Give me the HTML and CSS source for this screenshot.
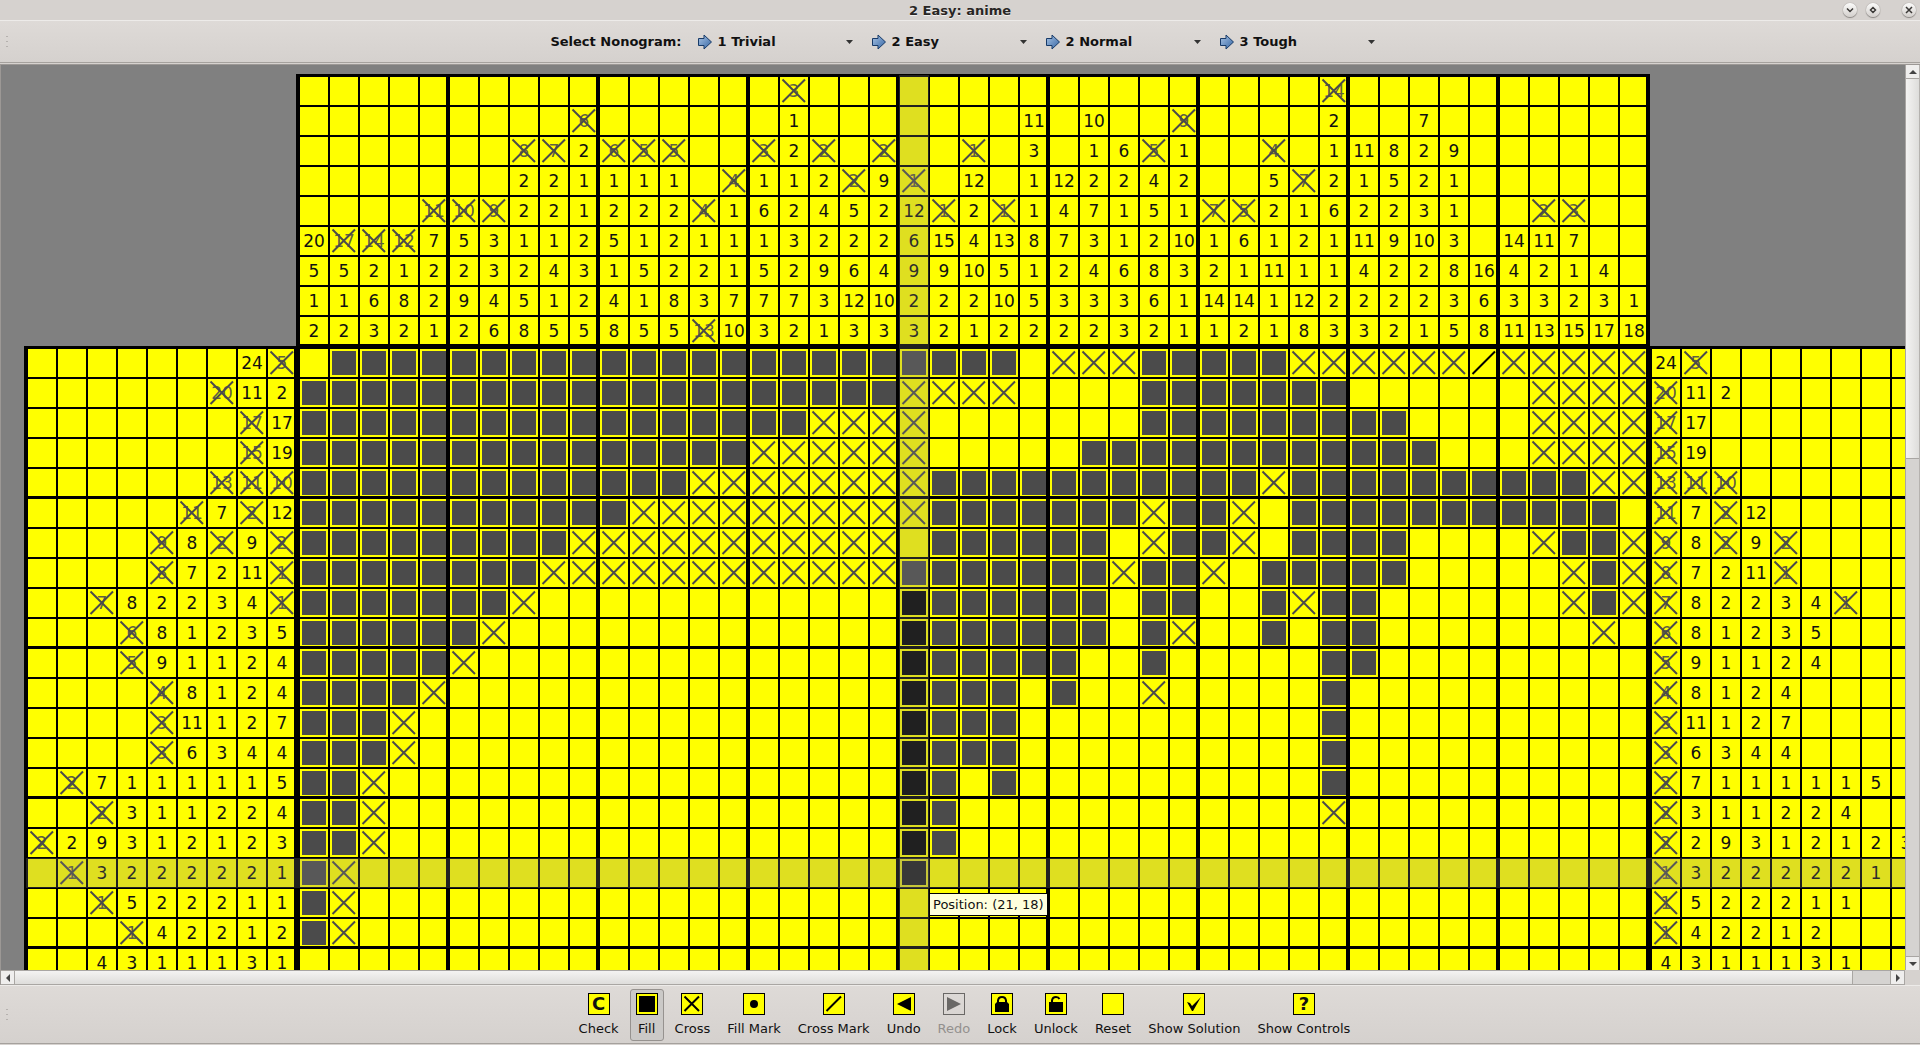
FILE: index.html
```html
<!DOCTYPE html>
<html lang="en">
<head>
<meta charset="utf-8">
<title>2 Easy: anime</title>
<link rel="stylesheet" href="styles.css">
</head>
<body>
<svg class="sprite" aria-hidden="true">
  <defs>
    <linearGradient id="arrow-fill" x1="0" y1="0" x2="1" y2="1">
      <stop offset="0" stop-color="#a9c4e4"/>
      <stop offset="1" stop-color="#3465a4"/>
    </linearGradient>
  </defs>
  <symbol id="cross" viewBox="0 0 28 28">
    <path d="M2.500 2.500L25 25M25 2.500L2.500 25"/>
  </symbol>
  <symbol id="slash" viewBox="0 0 28 28">
    <path d="M25 2.500L2.500 25"/>
  </symbol>
  <symbol id="arrow" viewBox="0 0 16 16">
    <path d="M1.500 4.500H7V1L14.500 8L7 15V11.500H1.500Z" fill="url(#arrow-fill)" stroke="#173a68"/>
  </symbol>
  <symbol id="caret" viewBox="0 0 8 4">
    <path d="M0 0H7L3.500 4Z" fill="#333"/>
  </symbol>
</svg>

<header class="titlebar">
  <h1 class="title">2 Easy: anime</h1>
  <div class="window-buttons">
    <button class="window-button" aria-label="Minimize"><svg viewBox="0 0 14 14"><path d="M4 5.500L7 8.500L10 5.500"/></svg></button>
    <button class="window-button" aria-label="Maximize"><svg viewBox="0 0 14 14"><path d="M7 4.500L9.500 7L7 9.500L4.500 7Z"/></svg></button>
    <button class="window-button close" aria-label="Close"><svg viewBox="0 0 14 14"><path d="M4 4L10 10M10 4L4 10"/></svg></button>
  </div>
</header>

<nav class="toolbar selectors">
  <span class="handle"></span>
  <div class="toolbar-items">
    <span class="selector-title">Select Nonogram:</span>
    <div class="selector"><svg class="arrow"><use href="#arrow"/></svg><select aria-label="Trivial puzzles"><option>1 Trivial</option></select><svg class="caret"><use href="#caret"/></svg></div>
    <div class="selector"><svg class="arrow"><use href="#arrow"/></svg><select aria-label="Easy puzzles"><option>2 Easy</option></select><svg class="caret"><use href="#caret"/></svg></div>
    <div class="selector"><svg class="arrow"><use href="#arrow"/></svg><select aria-label="Normal puzzles"><option>2 Normal</option></select><svg class="caret"><use href="#caret"/></svg></div>
    <div class="selector"><svg class="arrow"><use href="#arrow"/></svg><select aria-label="Tough puzzles"><option>3 Tough</option></select><svg class="caret"><use href="#caret"/></svg></div>
  </div>
</nav>

<main class="scroll-area">
  <div class="view">
    <div class="board">
      <table class="cells clues-top" id="clues-top"></table>
      <table class="cells clues-left" id="clues-left"></table>
      <table class="cells field" id="field"></table>
      <table class="cells clues-right" id="clues-right"></table>
      <div class="highlight highlight-column"></div>
      <div class="highlight highlight-row"></div>
      <div class="tooltip" role="tooltip">Position: (21, 18)</div>
    </div>
  </div>
  <div class="scrollbar vertical">
    <button class="step" aria-label="Scroll up"><svg viewBox="0 0 8 8"><path d="M0 6L4 2L8 6Z"/></svg></button>
    <div class="thumb"></div>
    <div class="trough"></div>
    <button class="step" aria-label="Scroll down"><svg viewBox="0 0 8 8"><path d="M0 2L4 6L8 2Z"/></svg></button>
  </div>
  <div class="scrollbar horizontal">
    <button class="step" aria-label="Scroll left"><svg viewBox="0 0 8 8"><path d="M6 0L2 4L6 8Z"/></svg></button>
    <div class="thumb"></div>
    <div class="trough"></div>
    <button class="step" aria-label="Scroll right"><svg viewBox="0 0 8 8"><path d="M2 0L6 4L2 8Z"/></svg></button>
  </div>
</main>

<footer class="toolbar tools">
  <span class="handle"></span>
  <div class="toolbar-items">
    <button class="tool"><span class="icon">C</span>Check</button>
    <button class="tool active" aria-pressed="true"><span class="icon"><svg viewBox="0 0 20 20"><path d="M2 2H18V18H2Z"/></svg></span>Fill</button>
    <button class="tool"><span class="icon"><svg viewBox="0 0 20 20"><path class="line" d="M2.500 2.500L17 17M17 2.500L2.500 17"/></svg></span>Cross</button>
    <button class="tool"><span class="icon"><svg viewBox="0 0 20 20"><circle cx="10" cy="10" r="4"/></svg></span>Fill Mark</button>
    <button class="tool"><span class="icon"><svg viewBox="0 0 20 20"><path class="line" d="M17 2.500L2.500 17"/></svg></span>Cross Mark</button>
    <button class="tool"><span class="icon"><svg viewBox="0 0 20 20"><path d="M3 10L17 3V17Z"/></svg></span>Undo</button>
    <button class="tool" disabled><span class="icon"><svg viewBox="0 0 20 20"><path d="M17 10L3 3V17Z"/></svg></span>Redo</button>
    <button class="tool"><span class="icon"><svg viewBox="0 0 20 20"><path d="M3 10L5 8H15L17 10V18H3Z"/><path class="line" d="M6 9V6.500Q6.500 3 10 3T14 6.500V9"/></svg></span>Lock</button>
    <button class="tool"><span class="icon"><svg viewBox="0 0 20 20"><path d="M3 8H17V18H3Z"/><path class="line" d="M6 9V6.500Q6.500 3 10 3Q12.500 3 13.500 5"/></svg></span>Unlock</button>
    <button class="tool"><span class="icon"></span>Reset</button>
    <button class="tool"><span class="icon"><svg viewBox="0 0 20 20"><path d="M3 8L6 9L8 12L17 3L9 17H8Z"/></svg></span>Show Solution</button>
    <button class="tool"><span class="icon">?</span>Show Controls</button>
  </div>
</footer>
<script src="script.js"></script>
</body>
</html>
```
FILE: styles.css
```css
* {
  box-sizing: border-box;
}

body {
  margin: 0;
  height: 100vh;
  display: flex;
  flex-direction: column;
  overflow: hidden;
  background: #d6d2cf;
  color: #111;
  font-family: "DejaVu Sans", sans-serif;
  font-size: 13px;
}

button,
select {
  font: inherit;
  color: inherit;
  margin: 0;
  padding: 0;
  border: 0;
  background: none;
}

.sprite {
  position: absolute;
  width: 0;
  height: 0;
}

/* Title bar */

.titlebar {
  flex: none;
  height: 20px;
  display: grid;
  grid-template-columns: 1fr auto 1fr;
  align-items: center;
  background: #d6d2cf;
}

.title {
  grid-column: 2;
  margin: 0;
  padding-top: 2px;
  font-size: 13px;
  line-height: 18px;
  color: #282624;
  text-shadow: 0 1px 0 #f2f0ef;
}

.window-buttons {
  display: flex;
  justify-content: flex-end;
  gap: 9px;
  padding-right: 4px;
}

.window-button {
  width: 14px;
  height: 14px;
  border-radius: 50%;
  background: linear-gradient(#fbfbfa, #d3cfcc);
  box-shadow: 0 1px 1px #8a8683, 0 0 1px #77736f;
}

.window-button.close {
  margin-left: 13px;
}

.window-button svg {
  display: block;
  width: 14px;
  height: 14px;
  fill: none;
  stroke: #3a3836;
  stroke-width: 1.5;
}

/* Toolbars */

.toolbar {
  flex: none;
  display: flex;
  align-items: center;
  background: linear-gradient(#dedad7, #d5d1ce);
  border-top: 1px solid #edebe9;
}

.selectors {
  height: 43px;
  border-bottom: 1px solid #a5a19d;
}

.tools {
  height: 59px;
  border-bottom: 1px solid #a5a19d;
  margin-bottom: 1px;
}

.handle {
  width: 4px;
  height: 16px;
  margin-left: 5px;
  background: radial-gradient(circle, #b5b1ae 1px, transparent 1px) 0 0 / 4px 5px;
}

.toolbar-items {
  flex: 1;
  display: flex;
  justify-content: center;
  align-items: center;
}

.selector-title {
  font-weight: bold;
  margin-right: 15px;
}

.selector {
  display: flex;
  align-items: center;
  width: 174px;
  padding-right: 17px;
}

.selector:last-child {
  width: 160px;
  padding-right: 3px;
}

.selector .arrow {
  width: 16px;
  height: 16px;
}

.selector select {
  flex: 1;
  appearance: none;
  margin-left: 5px;
  font-weight: bold;
  color: #111;
}

.selector .caret {
  width: 8px;
  height: 4px;
}

.tools .toolbar-items {
  gap: 5px;
}

.tool {
  display: flex;
  flex-direction: column;
  align-items: center;
  gap: 6px;
  height: 52px;
  padding: 3px 5px 0;
  border: 1px solid transparent;
  border-radius: 3px;
  line-height: 16px;
}

.tool.active {
  background: #cbc9c7;
  border-color: #96928f;
}

.tool:disabled {
  color: #93908e;
}

.icon {
  display: block;
  width: 22px;
  height: 22px;
  border: 1px solid #000;
  background: #ff0;
  font-size: 18px;
  font-weight: bold;
  line-height: 20px;
  text-align: center;
}

.icon svg {
  display: block;
  width: 20px;
  height: 20px;
}

.icon .line {
  fill: none;
  stroke: #000;
  stroke-width: 2;
}

.tool:disabled .icon {
  background: none;
  border-color: #6a6866;
  fill: #6a6866;
}

/* Scroll area */

.scroll-area {
  flex: 1;
  min-height: 0;
  display: grid;
  grid-template: minmax(0, 1fr) 15px / minmax(0, 1fr) 15px;
  margin-top: 1px;
  border-top: 1px solid #9c9895;
  border-left: 1px solid #9c9895;
}

.view {
  overflow: hidden;
  background: #808080;
  padding: 9px 0 0 23px;
}

.scrollbar {
  display: flex;
  background: #d5d3d1;
}

.vertical {
  flex-direction: column;
  border-left: 1px solid #a9a6a3;
  border-right: 1px solid #b5b2af;
}

.horizontal {
  border-top: 1px solid #a9a6a3;
  border-bottom: 1px solid #a9a6a3;
  border-right: 1px solid #a9a6a3;
}

.step {
  flex: none;
  width: 13px;
  height: 13px;
  display: grid;
  place-items: center;
  background: #efeeed;
}

.step svg {
  width: 8px;
  height: 8px;
  fill: #444;
}

.vertical .thumb {
  flex: 380;
  background: linear-gradient(90deg, #f4f3f2, #dedddb);
  border: solid #a9a6a3;
  border-width: 1px 0;
}

.vertical .trough {
  flex: 498;
  border-bottom: 1px solid #a9a6a3;
}

.horizontal .thumb {
  flex: 1842;
  background: linear-gradient(#f4f3f2, #dedddb);
  border: solid #a9a6a3;
  border-width: 0 1px;
}

.horizontal .trough {
  flex: 37;
  border-right: 1px solid #a9a6a3;
}

/* Board */

.board {
  position: relative;
  width: max-content;
  display: grid;
  grid-template-columns: repeat(3, auto);
}

.cells,
.cells tbody {
  display: block;
}

.cells {
  border: 0 solid #000;
}

.cells tr {
  display: flex;
}

.cells td {
  --right: -2px;
  --bottom: -2px;
  position: relative;
  flex: none;
  display: flex;
  align-items: center;
  justify-content: center;
  width: 30px;
  height: 30px;
  padding: 0 2px 2px 0;
  background: #ff0;
  box-shadow: inset var(--right) var(--bottom) #000;
  font-size: 17px;
  line-height: 28px;
}

.clues-top {
  grid-column: 2;
  border-width: 3px 0 0 4px;
}

.clues-top tr:last-child td {
  height: 29px;
  padding-bottom: 1px;
}

.clues-left {
  grid-column: 1;
  border-width: 3px 0 0 4px;
}

.clues-left td:last-child {
  width: 28px;
  padding-right: 0;
}

.field {
  border-width: 3px 0 0 4px;
}

.clues-right {
  border-width: 3px 0 0 2px;
}

.clues-top td:nth-child(5n),
.field td:nth-child(5n) {
  --right: -4px;
}

.clues-left tr:nth-child(5n) td,
.clues-right tr:nth-child(5n) td,
.field tr:nth-child(5n) td {
  --bottom: -3px;
}

.cells .filled::before {
  content: "";
  width: 24px;
  height: 24px;
  background: #4b4b4b;
}

.cells .fresh::before {
  background: #000;
}

.cells .struck {
  color: rgba(75, 75, 75, 0.9);
}

.mark {
  position: absolute;
  left: 0;
  top: 0;
  width: 28px;
  height: 28px;
  fill: none;
  stroke: #4b4b4b;
  stroke-width: 2;
}

.mark.slash {
  stroke: #000;
}

.highlight {
  position: absolute;
  background: rgba(128, 128, 128, 0.25);
}

.highlight-column {
  left: 875px;
  top: 1px;
  bottom: 0;
  width: 30px;
}

.highlight-row {
  left: 2px;
  right: 0;
  top: 784px;
  height: 30px;
}

.tooltip {
  position: absolute;
  left: 905px;
  top: 819px;
  padding: 0 3px;
  border: 1px solid #000;
  background: #ffffdc;
  line-height: 21px;
}
```
FILE: script.js
```js
// Clues are listed from the outside in; a leading "~" marks a clue that is crossed out.
const columnClues = [
  "20 5 1 2", "~17 5 1 2", "~14 2 6 3", "~12 1 8 2", "~11 7 2 2 1",
  "~10 5 2 9 2", "~9 3 3 4 6", "~8 2 2 1 2 5 8", "~7 2 2 1 4 1 5", "~6 2 1 1 2 3 2 5",
  "~6 1 2 5 1 4 8", "~5 1 2 1 5 1 5", "~5 1 2 2 2 8 5", "~4 1 2 3 ~13", "~4 1 1 1 7 10",
  "~3 1 6 1 5 7 3", "~3 1 2 1 2 3 2 7 2", "~2 2 4 2 9 3 1", "~2 5 2 6 12 3", "~2 9 2 2 4 10 3",
  "~1 12 6 9 2 3", "~1 15 9 2 2", "~1 12 2 4 10 2 1", "~1 13 5 10 2", "11 3 1 1 8 1 5 2",
  "12 4 7 2 3 2", "10 1 2 7 3 4 3 2", "6 2 1 1 6 3 3", "~5 4 5 2 8 6 2", "~9 1 2 1 10 3 1 1",
  "~7 1 2 14 1", "~5 6 1 14 2", "~4 5 2 1 11 1 1", "~7 1 2 1 12 8", "~14 2 1 2 6 1 1 2 3",
  "11 1 2 11 4 2 3", "8 5 2 9 2 2 2", "7 2 2 3 10 2 2 1", "9 1 1 3 8 3 5", "16 6 8",
  "14 4 3 11", "~2 11 2 3 13", "~3 7 1 2 15", "4 3 17", "1 18"
].map(s => s.split(" "));

const rowClues = [
  "24 ~5", "~20 11 2", "~17 17", "~15 19", "~13 ~11 ~10",
  "~11 7 ~2 12", "~9 8 ~2 9 ~2", "~8 7 2 11 ~1", "~7 8 2 2 3 4 ~1", "~6 8 1 2 3 5",
  "~5 9 1 1 2 4", "~4 8 1 2 4", "~3 11 1 2 7", "~3 6 3 4 4", "~2 7 1 1 1 1 1 5",
  "~2 3 1 1 2 2 4", "~2 2 9 3 1 2 1 2 3", "~1 3 2 2 2 2 2 1", "~1 5 2 2 2 1 1", "~1 4 2 2 1 2",
  "4 3 1 1 1 3 1"
].map(s => s.split(" "));

// Runs of cells: "#" filled, "b" filled in the current stroke, "x" crossed, "/" marked, "." empty.
const fieldRows = [
  "1. 23# 1. 3x 5# 6x 1/ 5x",
  "20# 4x 4. 7# 6. 4x",
  "17# 4x 7. 9# 4. 4x",
  "15# 6x 5. 12# 3. 4x",
  "13# 8x 11# 1x 10# 2x",
  "11# 10x 7# 1x 2# 1x 1. 11# 1.",
  "9# 11x 1. 6# 1. 1x 2# 1x 1. 4# 4. 1x 2# 1x",
  "8# 12x 7# 1x 2# 1x 1. 5# 5. 1x 1# 1x",
  "7# 1x 12. 1b 6# 1. 2# 2. 1# 1x 2# 6. 1x 1# 1x",
  "6# 1x 13. 1b 6# 1. 1# 1x 2. 1# 1. 2# 7. 1x 1.",
  "5# 1x 14. 1b 5# 2. 1# 5. 2# 9.",
  "4# 1x 15. 1b 3# 1. 1# 2. 1x 5. 1# 10.",
  "3# 1x 16. 1b 3# 10. 1# 10.",
  "3# 1x 16. 1b 3# 10. 1# 10.",
  "2# 1x 17. 1b 1# 1. 1# 10. 1# 10.",
  "2# 1x 17. 1b 1# 12. 1x 10.",
  "2# 1x 17. 1b 1# 23.",
  "1# 1x 18. 1b 24.",
  "1# 1x 43.",
  "1# 1x 43.",
  "45."
].map(s => s.split(" ").map(run => run.slice(-1).repeat(parseInt(run, 10))).join(""));

const CLUE_SLOTS = 9;

const mark = (name, extra = "") =>
  `<svg class="mark ${extra}"><use href="#${name}"/></svg>`;

function clueCell(clue) {
  if (!clue) return "<td></td>";
  return clue[0] === "~"
    ? `<td class="struck">${clue.slice(1)}${mark("cross")}</td>`
    : `<td>${clue}</td>`;
}

const fieldCell = {
  "#": '<td class="filled"></td>',
  b: '<td class="filled fresh"></td>',
  x: `<td>${mark("cross")}</td>`,
  "/": `<td>${mark("slash", "slash")}</td>`,
  ".": "<td></td>"
};

function fillTable(id, rows) {
  document.getElementById(id).innerHTML =
    rows.map(cells => `<tr>${cells.join("")}</tr>`).join("");
}

const slots = Array.from({ length: CLUE_SLOTS }, (_, i) => i);
const fromEnd = (clues, i) => clues[clues.length - CLUE_SLOTS + i];

fillTable("clues-top", slots.map(i => columnClues.map(c => clueCell(fromEnd(c, i)))));
fillTable("clues-left", rowClues.map(c => slots.map(i => clueCell(fromEnd(c, i)))));
fillTable("field", fieldRows.map(row => [...row].map(ch => fieldCell[ch])));
fillTable("clues-right", rowClues.map(c => slots.map(i => clueCell(c[i]))));
```
